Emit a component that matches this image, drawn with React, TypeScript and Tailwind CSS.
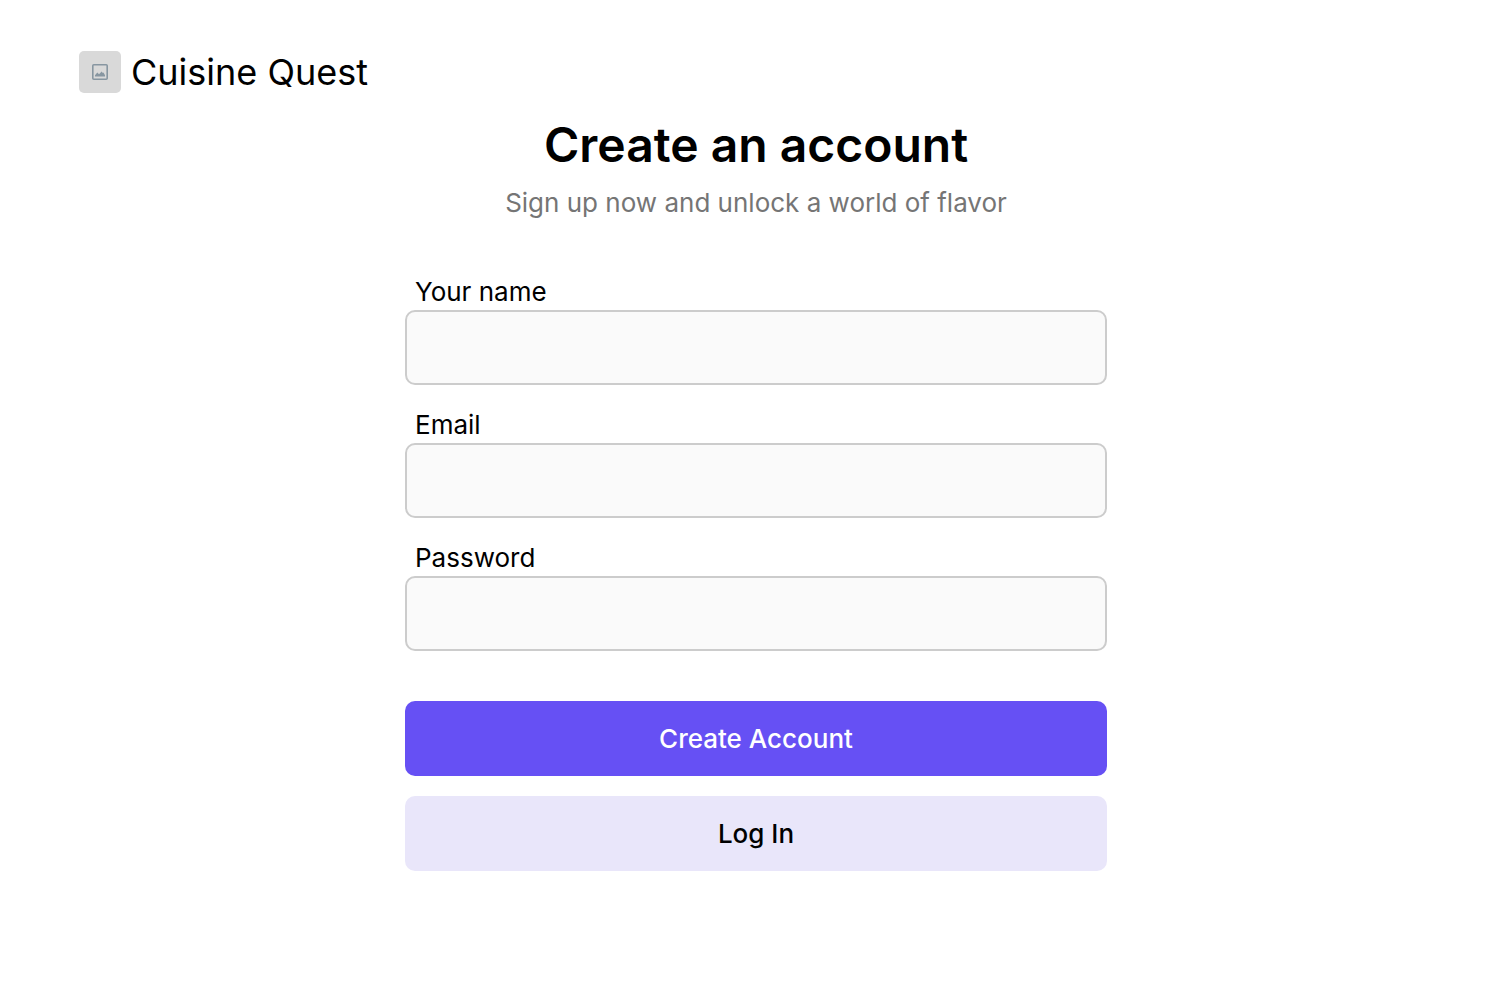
const fields = [
  { id: "name", label: "Your name", type: "text", autoComplete: "name" },
  { id: "email", label: "Email", type: "email", autoComplete: "email" },
  { id: "password", label: "Password", type: "password", autoComplete: "new-password" },
];

function LogoMark() {
  return (
    <span className="flex size-[42px] items-center justify-center rounded-[5px] bg-[#d9d9d9]">
      <svg viewBox="0 0 16 16" className="size-4" fill="none" aria-hidden="true">
        <rect x="0.8" y="0.8" width="14.4" height="14.4" rx="1" stroke="#8796a1" strokeWidth="1.6" />
        <path
          d="M3 12.4v-1.2l2.3-2.6 1.7 1.6 2.7-2.7 1.1 1.4.7-.4 1.5 2.7v1.2z"
          fill="#8796a1"
        />
      </svg>
    </span>
  );
}

export default function App() {
  return (
    <div className="min-h-screen bg-white px-6 font-['Inter',sans-serif] text-black sm:px-[79px]">
      <header className="flex items-center gap-2.5 pt-[51px]">
        <LogoMark />
        <span className="text-[36px] leading-[42px]">Cuisine Quest</span>
      </header>

      <main className="mx-auto flex max-w-[702px] flex-col pt-5 pb-12">
        <h1 className="text-center text-[48px] leading-[64px] font-semibold">Create an account</h1>
        <p className="pt-2 text-center text-[26px] leading-9 text-[#757575]">
          Sign up now and unlock a world of flavor
        </p>

        <form className="flex flex-col pt-[53px]" onSubmit={(event) => event.preventDefault()}>
          <div className="flex flex-col gap-[22px]">
            {fields.map((field) => (
              <div key={field.id} className="flex flex-col">
                <label htmlFor={field.id} className="px-2.5 text-[26px] leading-9">
                  {field.label}
                </label>
                <input
                  id={field.id}
                  name={field.id}
                  type={field.type}
                  autoComplete={field.autoComplete}
                  className="h-[75px] w-full rounded-[10px] border-2 border-[#cccccc] bg-[#fafafa] px-5 text-2xl"
                />
              </div>
            ))}
          </div>
          <div className="flex flex-col gap-5 pt-[50px]">
            <button type="submit" className="h-[75px] w-full rounded-[10px] bg-[#6650f4] text-[26px] font-medium text-white">
              Create Account
            </button>
            <button type="button" className="h-[75px] w-full rounded-[10px] bg-[#e9e6fa] text-[26px] font-medium">
              Log In
            </button>
          </div>
        </form>
      </main>
    </div>
  );
}
